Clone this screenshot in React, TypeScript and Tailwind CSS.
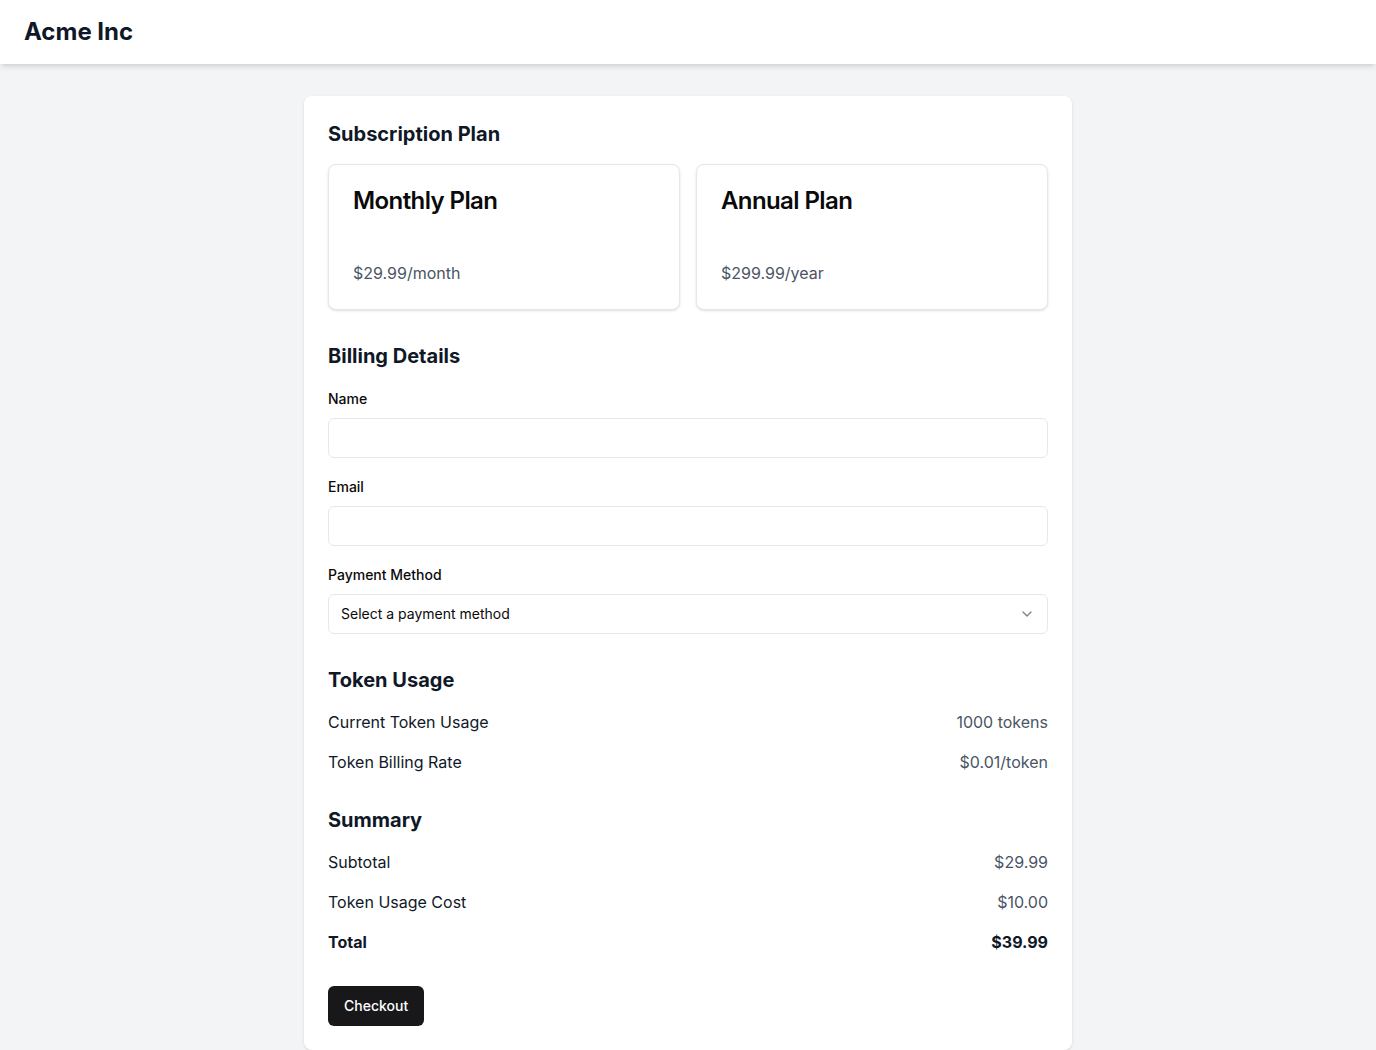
import React from "react";

function Row({ label, value, bold }: { label: string; value: string; bold?: boolean }) {
  return (
    <div className="flex items-center justify-between">
      <span className={bold ? "font-bold text-gray-900" : "text-gray-900"}>{label}</span>
      <span className={bold ? "font-bold text-gray-900" : "text-gray-600"}>{value}</span>
    </div>
  );
}

function PlanCard({ title, price }: { title: string; price: string }) {
  return (
    <div className="rounded-lg border border-gray-200 bg-white shadow-sm">
      <div className="flex flex-col space-y-1.5 p-6">
        <h3 className="text-2xl font-semibold leading-none tracking-tight text-[#0a0a0a]">{title}</h3>
        <p className="h-[18px] text-sm leading-5 text-gray-500"></p>
      </div>
      <div className="p-6 pt-0">
        <p className="text-gray-600">{price}</p>
      </div>
    </div>
  );
}

export default function App() {
  return (
    <div className="min-h-screen bg-gray-100 font-['Inter',sans-serif] text-gray-900">
      <header className="bg-white shadow-md">
        <div className="flex h-16 items-center px-6">
          <h1 className="text-2xl font-bold text-gray-900">Acme Inc</h1>
        </div>
      </header>
      <main className="py-8">
        <div className="mx-auto max-w-3xl rounded-lg bg-white p-6 shadow-sm">
          <section>
            <h2 className="mb-4 text-xl font-bold text-gray-900">Subscription Plan</h2>
            <div className="grid grid-cols-2 gap-4">
              <PlanCard title="Monthly Plan" price="$29.99/month" />
              <PlanCard title="Annual Plan" price="$299.99/year" />
            </div>
          </section>

          <section className="mt-8">
            <h2 className="mb-4 text-xl font-bold text-gray-900">Billing Details</h2>
            <div className="space-y-4">
              <div className="space-y-2">
                <div>
                  <label className="text-sm font-medium leading-none text-[#0a0a0a]">Name</label>
                </div>
                <input className="flex h-10 w-full rounded-md border border-gray-200 bg-white px-3 py-2 text-sm outline-none" />
              </div>
              <div className="space-y-2">
                <div>
                  <label className="text-sm font-medium leading-none text-[#0a0a0a]">Email</label>
                </div>
                <input className="flex h-10 w-full rounded-md border border-gray-200 bg-white px-3 py-2 text-sm outline-none" />
              </div>
              <div className="space-y-2">
                <div>
                  <label className="text-sm font-medium leading-none text-[#0a0a0a]">Payment Method</label>
                </div>
                <button className="flex h-10 w-full items-center justify-between rounded-md border border-gray-200 bg-white px-3 py-2 text-sm text-[#0a0a0a]">
                  <span>Select a payment method</span>
                  <svg className="h-4 w-4 opacity-50" viewBox="0 0 24 24" fill="none" stroke="currentColor" strokeWidth="2" strokeLinecap="round" strokeLinejoin="round">
                    <path d="m6 9 6 6 6-6" />
                  </svg>
                </button>
              </div>
            </div>
          </section>

          <section className="mt-8">
            <h2 className="mb-4 text-xl font-bold text-gray-900">Token Usage</h2>
            <div className="space-y-4">
              <Row label="Current Token Usage" value="1000 tokens" />
              <Row label="Token Billing Rate" value="$0.01/token" />
            </div>
          </section>

          <section className="mt-8">
            <h2 className="mb-4 text-xl font-bold text-gray-900">Summary</h2>
            <div className="space-y-4">
              <Row label="Subtotal" value="$29.99" />
              <Row label="Token Usage Cost" value="$10.00" />
              <Row label="Total" value="$39.99" bold />
            </div>
          </section>

          <div className="mt-8">
            <button className="inline-flex h-10 items-center justify-center rounded-md bg-[#18181b] px-4 py-2 text-sm font-medium text-white">
              Checkout
            </button>
          </div>
        </div>
      </main>
    </div>
  );
}
